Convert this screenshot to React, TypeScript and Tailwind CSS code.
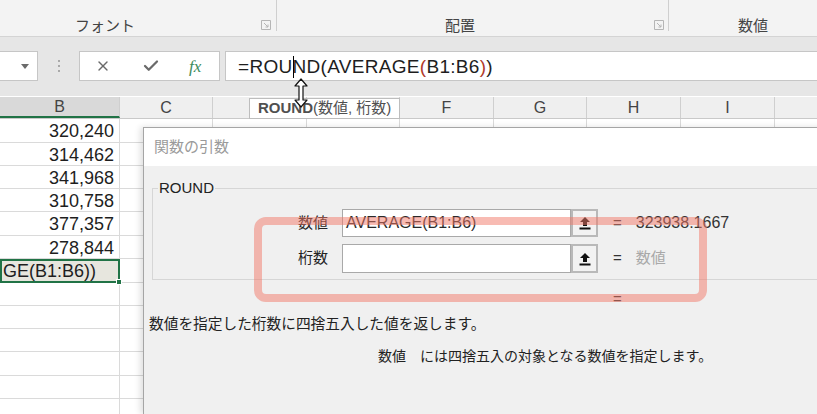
import { X, Check } from 'lucide-react';

const COLS = [
  { key: 'B', label: 'B', w: 'w-[120px]' },
  { key: 'C', label: 'C', w: 'w-[93px]' },
  { key: 'D', label: '', w: 'w-[94px]' },
  { key: 'E', label: '', w: 'w-[93px]' },
  { key: 'F', label: 'F', w: 'w-[94px]' },
  { key: 'G', label: 'G', w: 'w-[93px]' },
  { key: 'H', label: 'H', w: 'w-[94px]' },
  { key: 'I', label: 'I', w: 'w-[94px]' },
  { key: 'J', label: '', w: 'w-[60px]' },
];

const ROWS = [
  { h: 'h-[24px]', v: '320,240' },
  { h: 'h-[23px]', v: '314,462' },
  { h: 'h-[23px]', v: '341,968' },
  { h: 'h-[23px]', v: '310,758' },
  { h: 'h-[24px]', v: '377,357' },
  { h: 'h-[23px]', v: '278,844' },
  { h: 'h-[24px]', v: '', sel: true },
  { h: 'h-[23px]', v: '' },
  { h: 'h-[23px]', v: '' },
  { h: 'h-[23px]', v: '' },
  { h: 'h-[24px]', v: '' },
  { h: 'h-[23px]', v: '' },
  { h: 'h-[24px]', v: '' },
];

function Launcher() {
  return (
    <svg width="10" height="10" viewBox="0 0 10 10" className="shrink-0 mb-[5px]">
      <path d="M0.5 0.5h9v9h-9z" fill="none" stroke="#b5b5b5" />
      <path d="M3 3l4 4M7 4.5V7H4.5" fill="none" stroke="#b5b5b5" />
    </svg>
  );
}

function RefButton() {
  return (
    <div className="w-[27px] h-full shrink-0 border-2 border-[#b9b9b9] bg-[#f2f2f2] flex items-center justify-center">
      <svg width="12" height="14" viewBox="0 0 12 14">
        <path d="M6 1L1 6h3v4h4V6h3z" fill="#111" />
        <rect x="0.5" y="11.5" width="11" height="2" fill="#111" />
      </svg>
    </div>
  );
}

function Ribbon() {
  return (
    <div className="h-[37px] shrink-0 bg-[#f3f3f3] border-b border-[#d4d4d4] flex text-[15px] text-[#444]">
      <div className="w-[277px] shrink-0 flex items-end justify-between pb-[1px] pl-[75px] pr-[6px] relative">
        <span className="leading-[18px]">フォント</span>
        <Launcher />
        <span className="absolute right-0 top-0 h-[31px] w-px bg-[#cfcfcf]" />
      </div>
      <div className="w-[392px] shrink-0 flex items-end justify-between pb-[1px] pl-[168px] pr-[5px] relative">
        <span className="leading-[18px]">配置</span>
        <Launcher />
        <span className="absolute right-0 top-0 h-[31px] w-px bg-[#cfcfcf]" />
      </div>
      <div className="flex-1 flex items-end pb-[1px] pl-[69px]">
        <span className="leading-[18px]">数値</span>
      </div>
    </div>
  );
}

function FormulaBar() {
  return (
    <div className="h-[59px] shrink-0 bg-[#e6e6e6] pt-[14px] flex items-start">
      <div className="w-[38px] h-[30px] bg-white border-y border-r border-[#c6c6c6] flex items-center justify-end pr-[8px]">
        <svg width="8" height="5" viewBox="0 0 8 5">
          <path d="M0 0h8L4 5z" fill="#6b6b6b" />
        </svg>
      </div>
      <div className="w-[41px] h-[30px] flex flex-col items-center justify-center gap-[3px]">
        <span className="w-[2px] h-[2px] bg-[#a9a9a9]" />
        <span className="w-[2px] h-[2px] bg-[#a9a9a9]" />
        <span className="w-[2px] h-[2px] bg-[#a9a9a9]" />
      </div>
      <div className="w-[141px] h-[30px] bg-white border border-[#c6c6c6] flex items-center pl-[15px]">
        <X size={16} strokeWidth={2} color="#6a6a6a" />
        <Check size={18} strokeWidth={3} color="#6a6a6a" className="ml-[31px]" />
        <span className="ml-[29px] font-['Liberation_Serif',serif] italic text-[17px] text-[#3d8b5c] leading-none">
          fx
        </span>
      </div>
      <div className="flex-1 ml-[5px] h-[30px] bg-white border-y border-l border-[#c6c6c6] flex items-center pl-[12px] pt-[2px] text-[19px] tracking-[0.3px] text-[#1e1e1e] whitespace-nowrap">
        <span>=ROU</span>
        <span className="inline-block w-[1px] h-[22px] bg-black -mr-[1px]" />
        <span>ND(AVERAGE</span>
        <span className="text-[#b23a2a]">(</span>
        <span>B1:B6</span>
        <span className="text-[#b23a2a]">)</span>
        <span>)</span>
      </div>
    </div>
  );
}

function Sheet() {
  return (
    <div className="flex-1 min-h-0 overflow-hidden bg-white pt-px">
      <div className="h-[22px] bg-[#efefef] border-b border-[#c9c9c9] flex text-[16px] text-[#444]">
        {COLS.map((c) => (
          <div
            key={c.key}
            className={`${c.w} shrink-0 h-full border-r border-[#cfcfcf] flex items-center justify-center ${
              c.key === 'B' ? 'bg-[#d9d9d9] border-b-2 border-b-[#217346]' : ''
            }`}
          >
            {c.label}
          </div>
        ))}
      </div>
      {ROWS.map((r, i) => (
        <div key={i} className={`${r.h} flex text-[18px] text-[#1e1e1e]`}>
          {COLS.map((c) =>
            c.key === 'B' ? (
              r.sel ? (
                <div
                  key={c.key}
                  className={`${c.w} shrink-0 h-full relative border-2 border-[#217346] bg-[#e7e6de] flex items-center pl-[1px]`}
                >
                  <span className="whitespace-nowrap">GE(B1:B6))</span>
                  <span className="absolute -right-[4px] -bottom-[4px] w-[6px] h-[6px] bg-[#217346] border border-white" />
                </div>
              ) : (
                <div
                  key={c.key}
                  className={`${c.w} shrink-0 h-full border-r border-b border-[#dadada] flex items-center justify-end pr-[5px] pt-[2px]`}
                >
                  {r.v}
                </div>
              )
            ) : (
              <div key={c.key} className={`${c.w} shrink-0 h-full border-r border-b border-[#dadada]`} />
            )
          )}
        </div>
      ))}
    </div>
  );
}

function Dialog() {
  return (
    <div className="absolute left-[143px] top-[127px] w-[700px] bottom-0 border-l border-t border-[#a5a5a5] bg-[#f0f0f0] shadow-[-3px_0_6px_rgba(0,0,0,0.12)] flex flex-col">
      <div className="h-[38px] shrink-0 bg-white flex items-center pl-[10px] text-[15px] text-[#9a9a9a]">関数の引数</div>
      <div className="relative shrink-0 ml-[8px] mt-[22px] h-[92px] border border-[#d6d6d6] pt-[20px]">
        <span className="absolute left-[5px] -top-[11px] px-[1px] bg-[#f0f0f0] text-[15px] text-[#222] leading-[20px]">
          ROUND
        </span>
        <div className="h-[28px] flex items-center">
          <div className="w-[175px] text-right text-[15px] text-[#222]">数値</div>
          <div className="ml-[14px] w-[229px] h-full bg-white border border-[#a9a9a9] flex items-center pl-[3px] text-[16px] text-[#2a2a2a]">
            AVERAGE(B1:B6)
          </div>
          <RefButton />
          <span className="ml-[15px] text-[15px] text-[#333]">=</span>
          <span className="ml-[14px] text-[16px] text-[#333]">323938.1667</span>
        </div>
        <div className="h-[29px] mt-[7px] flex items-center">
          <div className="w-[175px] text-right text-[15px] text-[#222]">桁数</div>
          <div className="ml-[14px] w-[229px] h-full bg-white border border-[#a9a9a9]" />
          <RefButton />
          <span className="ml-[15px] text-[15px] text-[#333]">=</span>
          <span className="ml-[14px] text-[15px] text-[#a8a8a8]">数値</span>
        </div>
      </div>
      <div className="mt-[9px] h-[20px] shrink-0 flex items-center pl-[469px] text-[15px] text-[#333]">=</div>
      <div className="mt-[5px] h-[20px] shrink-0 flex items-center pl-[5px] text-[14.7px] text-[#222]">
        数値を指定した桁数に四捨五入した値を返します。
      </div>
      <div className="mt-[12px] h-[20px] shrink-0 flex items-center pl-[234px] text-[14px] text-[#222] whitespace-pre">
        数値　には四捨五入の対象となる数値を指定します。
      </div>
    </div>
  );
}

export default function App() {
  return (
    <div className="relative w-[817px] h-[414px] overflow-hidden flex flex-col bg-white font-['Liberation_Sans','Noto_Sans_CJK_JP',sans-serif]">
      <Ribbon />
      <FormulaBar />
      <Sheet />
      <Dialog />

      {/* tooltip over the column header */}
      <div className="absolute left-[249px] top-[98px] h-[21px] px-[8px] bg-white border border-[#bdbdbd] flex items-center text-[15px] text-[#505050] whitespace-nowrap">
        <span className="font-bold">ROUND</span>
        <span>(数値, 桁数)</span>
      </div>

      {/* mouse pointer */}
      <svg className="absolute left-[294px] top-[78px]" width="14" height="30" viewBox="0 0 14 30">
        <path
          d="M7 1L1 8h4v14H1l6 7 6-7H9V8h4z"
          fill="#fff"
          stroke="#111"
          strokeWidth="1.2"
          strokeLinejoin="round"
        />
      </svg>

      {/* red highlight */}
      <div className="absolute left-[254px] top-[217px] w-[453px] h-[85px] rounded-[12px] border-[8px] border-[rgba(242,120,104,0.5)]" />
    </div>
  );
}
